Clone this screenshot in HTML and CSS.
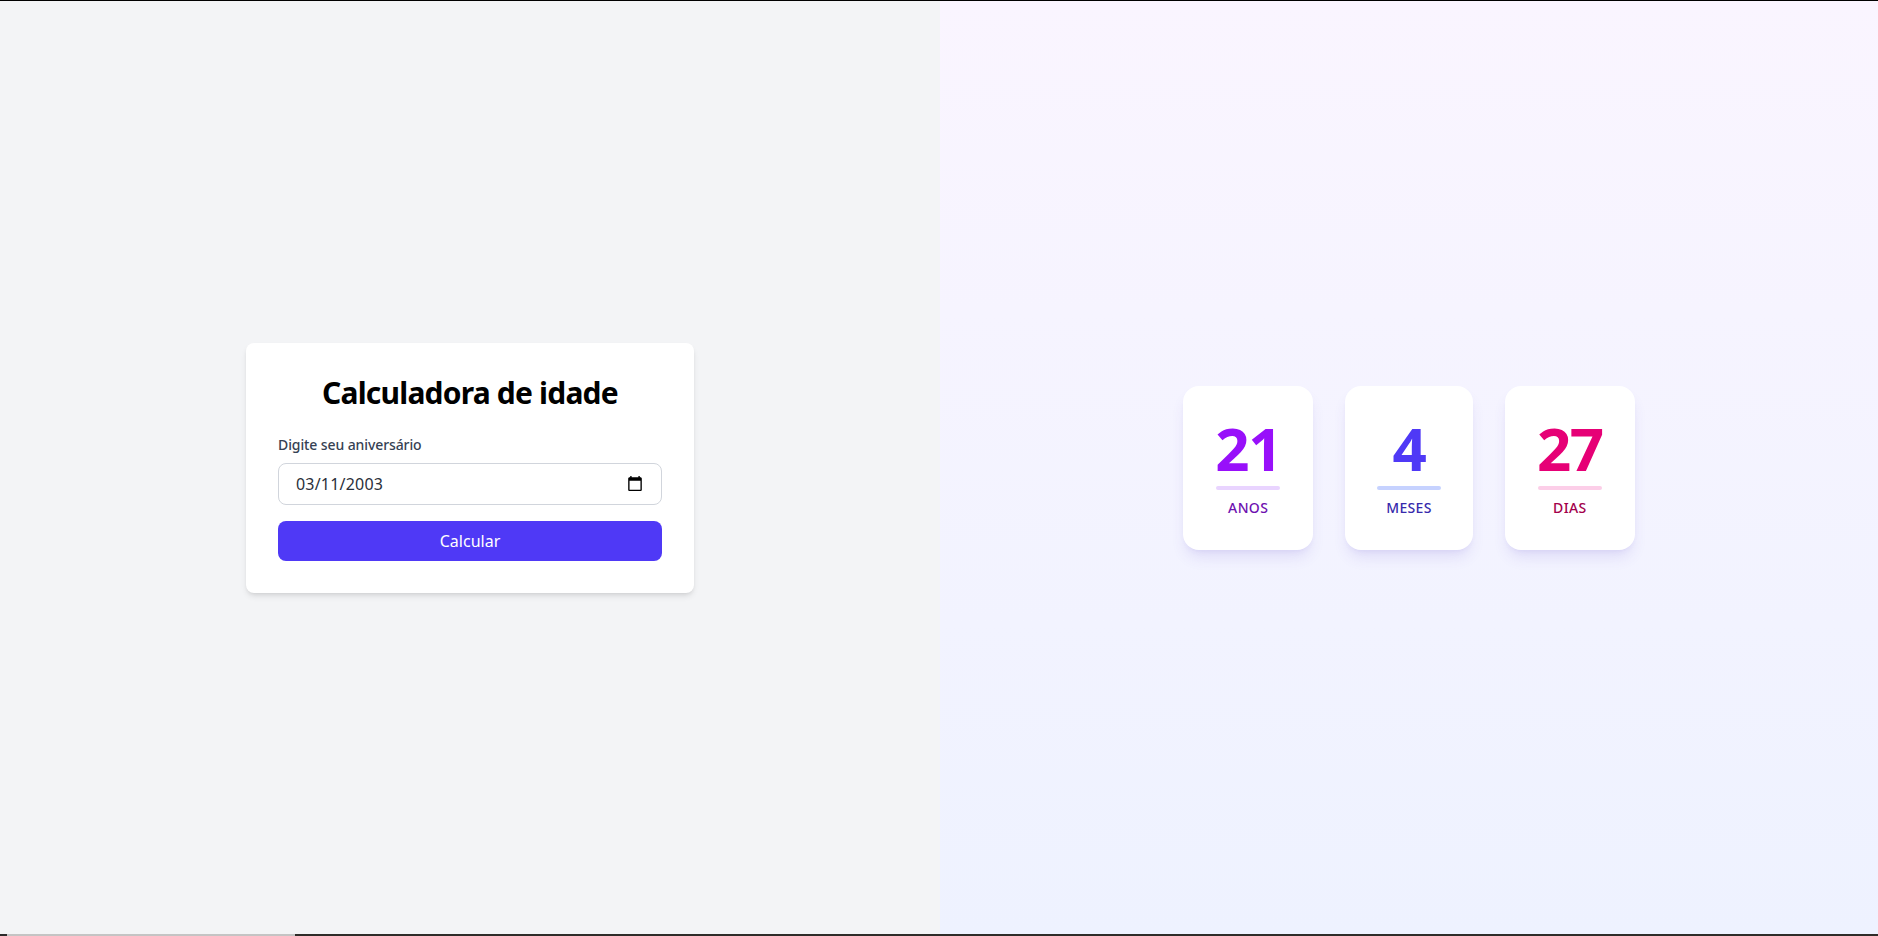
FILE: index.html
```html
<!DOCTYPE html>
<html lang="pt-BR">
<head>
<meta charset="utf-8">
<title>Calculadora de idade</title>
<link rel="stylesheet" href="styles.css">
</head>
<body>
<div class="frame">
  <main class="page">
    <section class="left">
      <div class="form-card">
        <h1 class="title">Calculadora de idade</h1>
        <label class="label" for="birth">Digite seu aniversário</label>
        <div class="date-field">
          <input id="birth" class="date-input" type="text" value="03/11/2003" readonly>
          <svg class="cal-icon" viewBox="2 1 20 22" width="14" height="15" aria-hidden="true"><path d="M20 3h-1V1h-2v2H7V1H5v2H4c-1.1 0-2 .9-2 2v16c0 1.1.9 2 2 2h16c1.1 0 2-.9 2-2V5c0-1.1-.9-2-2-2zm0 18H4V8h16v13z" fill="#000"/></svg>
        </div>
        <button class="btn" type="button">Calcular</button>
      </div>
    </section>
    <section class="right">
      <div class="stats">
        <div class="stat">
          <div class="num num-purple">21</div>
          <div class="bar bar-purple"></div>
          <div class="unit unit-purple">Anos</div>
        </div>
        <div class="stat">
          <div class="num num-indigo">4</div>
          <div class="bar bar-indigo"></div>
          <div class="unit unit-indigo">Meses</div>
        </div>
        <div class="stat">
          <div class="num num-pink">27</div>
          <div class="bar bar-pink"></div>
          <div class="unit unit-pink">Dias</div>
        </div>
      </div>
    </section>
  </main>
  <div class="bottom-strip">
    <div class="strip-a"></div>
    <div class="strip-b"></div>
    <div class="strip-c"></div>
  </div>
</div>
</body>
</html>
```
FILE: styles.css
```css
* { box-sizing: border-box; }
html, body { margin: 0; padding: 0; }
body {
  font-family: "Noto Sans", "Open Sans", sans-serif;
  width: 1878px;
  height: 936px;
  overflow: hidden;
}
.frame {
  display: flex;
  flex-direction: column;
  height: 936px;
  border-top: 1px solid #000;
}
.page {
  flex: 1;
  display: flex;
}
.left {
  width: 940px;
  background: #f3f4f6;
  display: flex;
  align-items: center;
  justify-content: center;
}
.right {
  flex: 1;
  background: linear-gradient(to bottom, #faf5ff, #eef2ff);
  display: flex;
  align-items: center;
  justify-content: center;
}
.form-card {
  width: 448px;
  background: #fff;
  border-radius: 8px;
  padding: 32px;
  display: flex;
  flex-direction: column;
  box-shadow: 0 4px 6px -1px rgba(0,0,0,0.1), 0 2px 4px -2px rgba(0,0,0,0.1);
}
.title {
  margin: 0 0 24px;
  font-size: 30px;
  line-height: 36px;
  font-weight: 700;
  text-align: center;
  color: #000;
  letter-spacing: -0.8px;
}
.label {
  font-size: 14px;
  line-height: 20px;
  font-weight: 500;
  color: #364153;
  margin-bottom: 8px;
  letter-spacing: -0.1px;
}
.date-field {
  height: 42px;
  border: 1px solid #d1d5dc;
  border-radius: 8px;
  display: flex;
  align-items: center;
  padding: 0 19px 0 17px;
}
.date-input {
  flex: 1;
  border: 0;
  outline: none;
  background: transparent;
  font-family: inherit;
  font-size: 16px;
  color: #2a2f3a;
  padding: 0;
  letter-spacing: 0.2px;
}
.cal-icon { display: block; }
.btn {
  margin-top: 16px;
  height: 40px;
  border: 0;
  border-radius: 8px;
  background: #4f39f6;
  color: #fff;
  font-family: inherit;
  font-size: 16px;
}
.stats {
  display: flex;
  gap: 32px;
}
.stat {
  min-width: 128px;
  background: #fff;
  border-radius: 16px;
  padding: 32px;
  display: flex;
  flex-direction: column;
  align-items: center;
  box-shadow: 0 10px 15px -3px rgba(80,60,200,0.12), 0 4px 6px -4px rgba(80,60,200,0.12);
}
.num {
  font-size: 60px;
  line-height: 60px;
  font-weight: 700;
  letter-spacing: -1.5px;
}
.num-purple { color: #9810fa; }
.num-indigo { color: #4f39f6; }
.num-pink { color: #e60076; }
.bar {
  width: 64px;
  height: 4px;
  border-radius: 9999px;
  margin-top: 8px;
}
.bar-purple { background: #e9d4ff; }
.bar-indigo { background: #c6d2ff; }
.bar-pink { background: #fccee8; }
.unit {
  margin-top: 8px;
  font-size: 14px;
  line-height: 20px;
  font-weight: 500;
  text-transform: uppercase;
  letter-spacing: 0.35px;
}
.unit-purple { color: #6e11b0; }
.unit-indigo { color: #372aac; }
.unit-pink { color: #a3004c; }
.bottom-strip {
  height: 2px;
  display: flex;
}
.strip-a { width: 7px; background: #2b2b2b; }
.strip-b { width: 288px; background: #c4c4c4; }
.strip-c { flex: 1; background: #2e2c29; }
```
